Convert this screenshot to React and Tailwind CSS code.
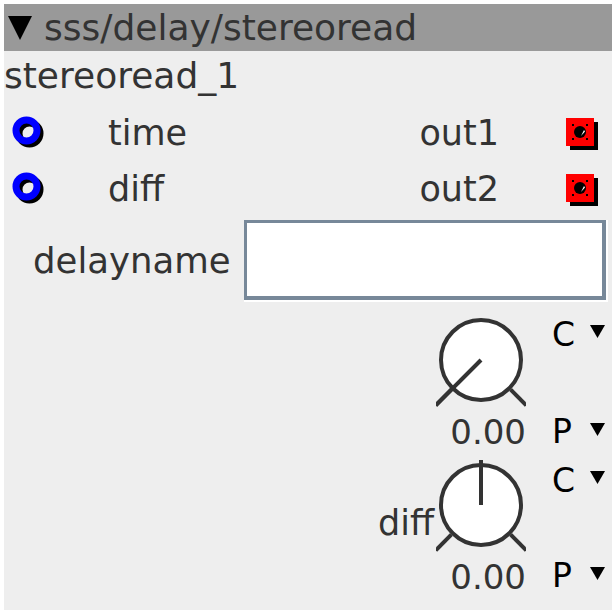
import React from 'react';

const sans = { fontFamily: '"DejaVu Sans", Verdana, sans-serif' };

function Inlet() {
  return (
    <svg width="34" height="34" viewBox="0 0 34 34">
      <circle cx="17.5" cy="17.5" r="10.5" fill="none" stroke="#000" strokeWidth="7" />
      <circle cx="14.5" cy="14.5" r="10.5" fill="none" stroke="#0000ff" strokeWidth="7" />
    </svg>
  );
}

function Outlet() {
  return (
    <svg width="34" height="34" viewBox="0 0 34 34">
      <rect x="4" y="4" width="28" height="28" fill="#000" />
      <rect x="0" y="0" width="28" height="28" fill="#ff0000" />
      <circle cx="14" cy="14" r="6" fill="#000" />
      <path d="M15 18 L19 13.5 L18 12 Z" fill="#fff" />
      {[[7, 7], [21, 7], [7, 21], [21, 21]].map(([x, y], i) => (
        <rect key={i} x={x - 1} y={y - 1} width="2" height="2" fill="#000" />
      ))}
    </svg>
  );
}

function Tri({ w = 15, h = 13 }) {
  return (
    <svg width={w} height={h} viewBox={`0 0 ${w} ${h}`} className="block">
      <polygon points={`0,0 ${w},0 ${w / 2},${h}`} fill="#000" />
    </svg>
  );
}

function Knob({ angle }) {
  const cx = 45;
  const cy = 45;
  const pt = (a, r) => {
    const rad = (a * Math.PI) / 180;
    return [cx + r * Math.sin(rad), cy - r * Math.cos(rad)];
  };
  const [l1x, l1y] = pt(-135, 42);
  const [l2x, l2y] = pt(-135, 64);
  const [r1x, r1y] = pt(135, 42);
  const [r2x, r2y] = pt(135, 64);
  const [px, py] = pt(angle, 64);
  return (
    <svg width="90" height="92" viewBox="0 0 90 92" className="block">
      <circle cx={cx} cy={cy} r="40" fill="#fff" stroke="#333" strokeWidth="4" />
      <line x1={l1x} y1={l1y} x2={l2x} y2={l2y} stroke="#333" strokeWidth="4" />
      <line x1={r1x} y1={r1y} x2={r2x} y2={r2y} stroke="#333" strokeWidth="4" />
      <line x1={cx} y1={cy} x2={px} y2={py} stroke="#333" strokeWidth="4" />
    </svg>
  );
}

function KnobRow({ label, angle, knobTop, cTop, gap }) {
  return (
    <div className="flex justify-end pr-[7px] shrink-0">
      {label && (
        <span className="text-[35px] leading-[40px] text-[#333] mt-[45px] mr-[2px]" style={sans}>
          {label}
        </span>
      )}
      <div className="flex flex-col w-[90px]" style={{ marginTop: knobTop }}>
        <Knob angle={angle} />
        <div className="text-right text-[34px] leading-[51px] text-[#333] whitespace-nowrap" style={sans}>
          0.00
        </div>
      </div>
      <div className="flex flex-col w-[53px] ml-[26px]" style={{ marginTop: cTop }}>
        <div className="flex items-start h-[38px] text-[33px] leading-[38px] text-black" style={sans}>
          <span>C</span>
          <span className="ml-auto mt-[9px]"><Tri /></span>
        </div>
        <div className="flex items-start h-[38px] text-[33px] leading-[38px] text-black" style={{ ...sans, marginTop: gap }}>
          <span>P</span>
          <span className="ml-auto mt-[10px]"><Tri /></span>
        </div>
      </div>
    </div>
  );
}

function PortRow({ name, out }) {
  return (
    <div className="flex items-center h-[56px] text-[35px] text-[#333] shrink-0" style={sans}>
      <div className="ml-[8px]"><Inlet /></div>
      <span className="ml-[62px] flex-1">{name}</span>
      <span>{out}</span>
      <div className="ml-[67px] mr-[12px] mt-[4px]"><Outlet /></div>
    </div>
  );
}

export default function App() {
  return (
    <div className="w-[616px] h-[616px] bg-white pt-1 pl-1">
      <div className="w-[608px] h-[606px] bg-[#eeeeee] flex flex-col overflow-hidden">
        {/* title */}
        <div className="h-[47px] bg-[#999999] flex items-center shrink-0">
          <span className="ml-[4px] mt-[1px]"><Tri w={24} h={24} /></span>
          <span className="ml-[12px] text-[36px] text-[#333] whitespace-nowrap" style={sans}>sss/delay/stereoread</span>
        </div>

        <div className="h-[54px] text-[36px] leading-[49px] text-[#333] shrink-0" style={sans}>
          stereoread_1
        </div>

        <PortRow name="time" out="out1" />
        <PortRow name="diff" out="out2" />

        {/* delayname */}
        <div className="flex items-center mt-[3px] h-[82px] shrink-0">
          <span className="ml-[29px] text-[35.5px] text-[#333]" style={sans}>delayname</span>
          <div className="ml-[13px] border-b-2 border-r-2 border-white">
            <div className="w-[362px] h-[80px] bg-white border-t-[3px] border-l-[3px] border-b-4 border-r-4 border-[#778899]" />
          </div>
        </div>

        <KnobRow angle={-135} knobTop={13} cTop={14} gap={59} />
        <KnobRow label="diff" angle={0} knobTop={2} cTop={4} gap={57} />
      </div>
    </div>
  );
}
